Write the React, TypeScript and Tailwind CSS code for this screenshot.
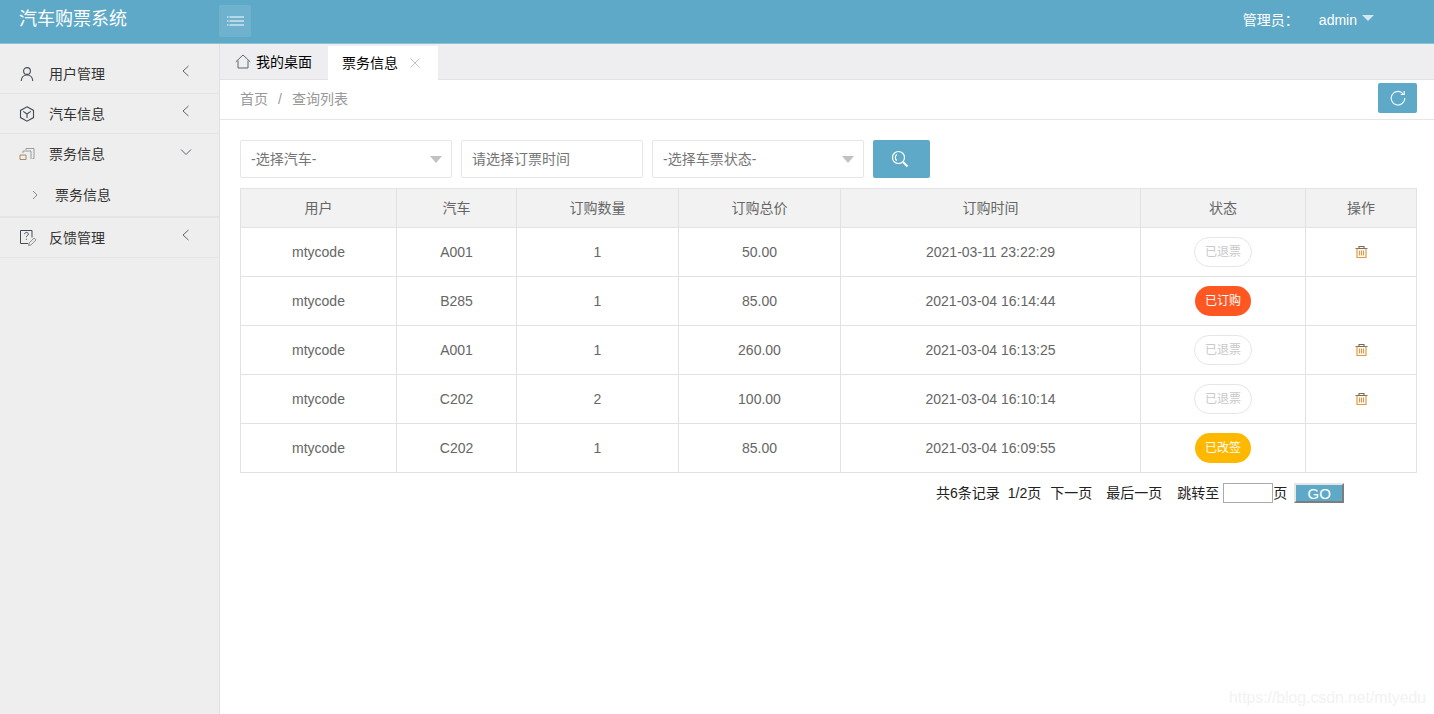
/**
 * Bus ticket admin page - ticket list
 */

import type { ReactNode } from 'react';

const FONT = "font-['Liberation_Sans','Noto_Sans_CJK_SC',sans-serif]";

type Status = 'refunded' | 'ordered' | 'changed';

const rows: { user: string; bus: string; qty: number; total: string; time: string; status: Status }[] = [
  { user: 'mtycode', bus: 'A001', qty: 1, total: '50.00', time: '2021-03-11 23:22:29', status: 'refunded' },
  { user: 'mtycode', bus: 'B285', qty: 1, total: '85.00', time: '2021-03-04 16:14:44', status: 'ordered' },
  { user: 'mtycode', bus: 'A001', qty: 1, total: '260.00', time: '2021-03-04 16:13:25', status: 'refunded' },
  { user: 'mtycode', bus: 'C202', qty: 2, total: '100.00', time: '2021-03-04 16:10:14', status: 'refunded' },
  { user: 'mtycode', bus: 'C202', qty: 1, total: '85.00', time: '2021-03-04 16:09:55', status: 'changed' },
];

function UserIcon() {
  return (
    <svg width="16" height="16" viewBox="0 0 16 16" fill="none" stroke="#444b55" strokeWidth="1.1">
      <circle cx="8" cy="5" r="3.4" />
      <path d="M2.2 15c.3-3.6 2.4-6 5.8-6s5.5 2.4 5.8 6" />
    </svg>
  );
}

function BoxIcon() {
  return (
    <svg width="16" height="16" viewBox="0 0 16 16" fill="none" stroke="#444b55" strokeWidth="1.1">
      <path d="M8 .8l6.500 3.600v7.200L8 15.200l-6.500-3.600V4.400z" />
      <path d="M4.200 5.400L8 8l3.800-2.600M8 8v4" />
    </svg>
  );
}

function TicketIcon() {
  return (
    <svg width="16" height="16" viewBox="0 0 16 16" fill="none" stroke="#9a9a9a" strokeWidth="1">
      <path d="M7 4V2.500h8v10h-1.500" />
      <path d="M4 7V5h8v8" />
      <path d="M1 13.500V9h6v4.500z" stroke="#a88a66" />
    </svg>
  );
}

function FeedbackIcon() {
  return (
    <svg width="18" height="18" viewBox="0 0 18 18" fill="none" stroke="#444b55" strokeWidth="1">
      <path d="M9 14.500H1.500V1.500h11.500v7" />
      <path d="M5.500 5.200c.2-1.200 1-1.800 1.900-1.800 1.100 0 1.900.7 1.900 1.700 0 1.500-1.900 1.500-1.900 3.100M7.400 9.800v1" />
      <path d="M9.500 16.500l.6-2.500 5-5 1.900 1.900-5 5z" stroke="#8c8c8c" />
    </svg>
  );
}

function SideChevron({ open = false }: { open?: boolean }) {
  return (
    <svg width="12" height="12" viewBox="0 0 12 12" fill="none" stroke="#5f6670" strokeWidth="1">
      {open ? <path d="M1 3.500l5 5 5-5" /> : <path d="M8.500 1L3 6l5.500 5" />}
    </svg>
  );
}

function TrashIcon() {
  return (
    <svg className="-mt-px" width="13" height="13" viewBox="0 0 13 13" fill="none" stroke="#7d6a55" strokeWidth="1.1">
      <path d="M.5 3.500h12M4 3.500V1.500h5v2" />
      <path d="M2 3.500v9h9v-9" stroke="#e09a45" strokeWidth="1.2" />
      <path d="M4.500 5.500v5M6.500 5.500v5M8.500 5.500v5" stroke="#e09a45" strokeWidth="1.2" />
    </svg>
  );
}

function MenuItem({ icon, label, open, className = '' }: { icon: ReactNode; label: string; open?: boolean; className?: string }) {
  return (
    <div className={`flex h-10 items-center border-b border-[#e4e4e4] pl-[19px] pr-[27px] text-[14px] text-[#333] ${className}`}>
      <span className="flex w-[30px] shrink-0">{icon}</span>
      <span className="mt-px flex-1">{label}</span>
      <span className="-mt-[5px]">
        <SideChevron open={open} />
      </span>
    </div>
  );
}

function Sidebar() {
  return (
    <aside className="w-[220px] shrink-0 border-r border-[#e0e0e0] bg-[#eeeeee] pt-[10px]">
      <MenuItem icon={<UserIcon />} label="用户管理" />
      <MenuItem icon={<BoxIcon />} label="汽车信息" />
      <MenuItem icon={<TicketIcon />} label="票务信息" open className="border-b-0" />
      <div className="flex h-[44px] items-center border-b-2 border-[#e4e4e4] pl-[31px] text-[14px] text-[#333]">
        <svg width="8" height="10" viewBox="0 0 8 10" fill="none" stroke="#7e8b99" strokeWidth="1">
          <path d="M2 1l4 4-4 4" />
        </svg>
        <span className="ml-[16px]">票务信息</span>
      </div>
      <MenuItem icon={<FeedbackIcon />} label="反馈管理" />
    </aside>
  );
}

function Select({ label, width }: { label: string; width: string }) {
  return (
    <div className={`flex h-[38px] items-center justify-between rounded-[2px] border border-[#e6e6e6] bg-white pl-[10px] pr-[9px] text-[14px] text-[#757575] ${width}`}>
      <span>{label}</span>
      <span className="h-0 w-0 border-x-[6px] border-t-[7px] border-x-transparent border-t-[#c2c2c2]" />
    </div>
  );
}

function StatusBadge({ status }: { status: Status }) {
  if (status === 'refunded') {
    return (
      <span className="inline-flex h-[30px] w-[58px] items-center justify-center rounded-full border border-[#e6e6e6] bg-white text-[12px] text-[#c9c9c9]">
        已退票
      </span>
    );
  }
  return (
    <span
      className={`inline-flex h-[30px] w-[56px] items-center justify-center rounded-full text-[12px] text-white ${
        status === 'ordered' ? 'bg-[#ff5722]' : 'bg-[#ffb800]'
      }`}
    >
      {status === 'ordered' ? '已订购' : '已改签'}
    </span>
  );
}

function TicketTable() {
  const headers = ['用户', '汽车', '订购数量', '订购总价', '订购时间', '状态', '操作'];
  const cell = 'border border-[#e2e2e2] p-0 text-center align-middle';

  return (
    <table className="w-[1176px] table-fixed border-collapse text-[14px] text-[#666]">
      <colgroup>
        <col className="w-[156px]" />
        <col className="w-[120px]" />
        <col className="w-[162px]" />
        <col className="w-[162px]" />
        <col className="w-[300px]" />
        <col className="w-[165px]" />
        <col className="w-[111px]" />
      </colgroup>
      <thead>
        <tr className="h-[39px] bg-[#f2f2f2]">
          {headers.map((h) => (
            <th key={h} className={`${cell} font-normal`}>
              {h}
            </th>
          ))}
        </tr>
      </thead>
      <tbody>
        {rows.map((r) => (
          <tr key={r.time} className="h-[49px]">
            <td className={cell}>{r.user}</td>
            <td className={cell}>{r.bus}</td>
            <td className={cell}>{r.qty}</td>
            <td className={cell}>{r.total}</td>
            <td className={cell}>{r.time}</td>
            <td className={cell}>
              <div className="flex items-center justify-center">
                <StatusBadge status={r.status} />
              </div>
            </td>
            <td className={cell}>
              {r.status === 'refunded' && (
                <div className="flex justify-center">
                  <TrashIcon />
                </div>
              )}
            </td>
          </tr>
        ))}
      </tbody>
    </table>
  );
}

export default function App() {
  return (
    <div className={`relative flex h-[714px] w-[1434px] flex-col overflow-hidden bg-white ${FONT}`}>
      {/* Header */}
      <header className="flex h-11 shrink-0 items-start border-b border-[#8dc0d6] bg-[#5fa9c8] text-white">
        <div className="mt-[7px] w-[219px] pl-[19px] text-[18px] leading-6">汽车购票系统</div>
        <button className="mt-[5px] flex h-8 w-8 items-center justify-center rounded-[2px] bg-[#6fb2ce]">
          <svg width="17" height="10" viewBox="0 0 17 10" fill="none" stroke="#fff" strokeWidth="1">
            <path d="M0 1h1.500M2.500 1h14.500M0 5h1.500M2.500 5h14.500M0 9h1.500M2.500 9h14.500" />
          </svg>
        </button>
        <div className="ml-auto mr-[60px] mt-[12px] flex items-center text-[14px] leading-4">
          <span>管理员：</span>
          <span className="ml-[20px]">admin</span>
          <span className="mb-[5px] ml-[5px] h-0 w-0 border-x-[6px] border-t-[6px] border-x-transparent border-t-[#d6e8f0]" />
        </div>
      </header>

      <div className="flex min-h-0 flex-1">
        <Sidebar />

        <main className="flex min-w-0 flex-1 flex-col">
          {/* Tabs */}
          <div className="flex h-9 shrink-0 items-end border-b border-[#e2e2e2] bg-[#eeeef0]">
            <div className="flex h-[34px] w-[108px] items-center pl-[15px] text-[14px] text-black">
              <svg width="16" height="16" viewBox="0 0 16 16" fill="none" stroke="#5a6675" strokeWidth="1">
                <path d="M.8 7.800L8 1l7.200 6.800M3 6.500V14h10V6.500" />
              </svg>
              <span className="ml-[5px]">我的桌面</span>
            </div>
            <div className="-mb-px flex h-[34px] w-[110px] items-center bg-white pl-[14px] text-[14px] text-black">
              <span>票务信息</span>
              <svg className="ml-[12px]" width="10" height="10" viewBox="0 0 10 10" fill="none" stroke="#c4c4c4" strokeWidth="1">
                <path d="M.5.500l9 9M9.500.500l-9 9" />
              </svg>
            </div>
          </div>

          {/* Breadcrumb */}
          <div className="flex h-10 shrink-0 items-center border-b border-[#e6e6e6] pl-5 pr-[17px] text-[14px] text-[#999]">
            <span>首页</span>
            <span className="mx-[10px]">/</span>
            <span>查询列表</span>
            <button className="-mt-[4px] ml-auto flex h-[30px] w-[39px] items-center justify-center rounded-[2px] bg-[#5fa9c8]">
              <svg width="16" height="16" viewBox="0 0 16 16" fill="none" stroke="#fff" strokeWidth="1.1">
                <path d="M13.200 3.800A6.800 6.800 0 1 0 14.800 8" />
                <path d="M14.200 1v3.500h-3.500" />
              </svg>
            </button>
          </div>

          {/* Content */}
          <div className="flex-1 pl-5 pt-5">
            <div className="flex gap-[9px]">
              <Select label="-选择汽车-" width="w-[212px]" />
              <div className="flex h-[38px] w-[182px] items-center rounded-[2px] border border-[#e6e6e6] pl-[10px] text-[14px] text-[#757575]">
                请选择订票时间
              </div>
              <Select label="-选择车票状态-" width="w-[212px]" />
              <button className="flex h-[38px] w-[57px] items-center justify-center rounded-[2px] bg-[#5fa9c8] pr-[4px]">
                <svg width="18" height="18" viewBox="0 0 18 18" fill="none" stroke="#fff" strokeWidth="1.2">
                  <circle cx="7.500" cy="7.500" r="6" />
                  <path d="M6 4.500a3.500 3.500 0 0 0 0 6" />
                  <path d="M12 12l4.500 4.500" strokeWidth="2" />
                </svg>
              </button>
            </div>

            <div className="mt-[10px]">
              <TicketTable />
            </div>

            {/* Pagination */}
            <div className="mt-[10px] flex h-5 items-center pl-[696px] text-[14px] text-[#222]">
              <span>共6条记录</span>
              <span className="ml-[8px]">1/2页</span>
              <span className="ml-[9px]">下一页</span>
              <span className="ml-[14px]">最后一页</span>
              <span className="ml-[15px]">跳转至</span>
              <input className="ml-[4px] h-5 w-[50px] border border-[#aaa] bg-white" />
              <span>页</span>
              <button className="ml-[7px] h-5 w-[50px] border-2 border-t-[#e6e6e6] border-l-[#e6e6e6] border-r-[#7d7d7d] border-b-[#7d7d7d] bg-[#5fa9c8] text-[15px] leading-none text-white">
                GO
              </button>
            </div>
          </div>
        </main>
      </div>

      {/* csdn watermark */}
      <div className="absolute bottom-[6px] right-[8px] text-[15.75px] leading-5 text-[#f2f2f2]">https://blog.csdn.net/mtyedu</div>
    </div>
  );
}
